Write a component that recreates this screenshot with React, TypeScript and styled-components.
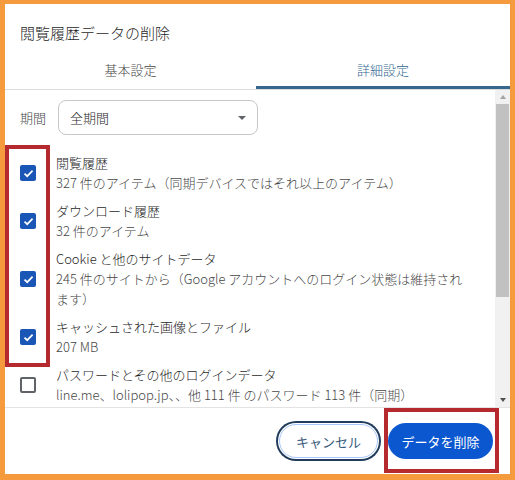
import React from 'react'
import styled, { createGlobalStyle } from 'styled-components'

const GlobalStyle = createGlobalStyle`
  html, body {
    margin: 0;
    padding: 0;
    background: #ffffff;
  }
  body {
    font-family: "Noto Sans CJK JP", "Noto Sans", sans-serif;
    font-weight: 300;
  }
`

type Item = {
  id: number
  title: string
  lines: string[]
  checked: boolean
}

const items: Item[] = [
  { id: 1, title: '閲覧履歴', lines: ['327 件のアイテム（同期デバイスではそれ以上のアイテム）'], checked: true },
  { id: 2, title: 'ダウンロード履歴', lines: ['32 件のアイテム'], checked: true },
  {
    id: 3,
    title: 'Cookie と他のサイトデータ',
    lines: ['245 件のサイトから（Google アカウントへのログイン状態は維持され', 'ます）'],
    checked: true,
  },
  { id: 4, title: 'キャッシュされた画像とファイル', lines: ['207 MB'], checked: true },
  {
    id: 5,
    title: 'パスワードとその他のログインデータ',
    lines: ['line.me、lolipop.jp、、他 111 件 のパスワード 113 件（同期）'],
    checked: false,
  },
]

const Frame = styled.div`
  position: relative;
  box-sizing: border-box;
  width: 515px;
  height: 480px;
  border-style: solid;
  border-color: #f59b3d;
  border-width: 4px 5px 6px 5px;
  background: #ffffff;
  display: flex;
  flex-direction: column;
  overflow: hidden;
`

const Header = styled.div`
  height: 46px;
  box-sizing: border-box;
  padding: 19px 0 0 15px;
`

const Title = styled.h1`
  margin: 0;
  font-size: 15px;
  line-height: 20px;
  font-weight: 300;
  color: #1f1f1f;
`

const TabBar = styled.div`
  display: grid;
  grid-template-columns: 251px 1fr;
  height: 40px;
  box-sizing: border-box;
  border-bottom: 1px solid #dcdcdc;
`

const Tab = styled.div<{ $active?: boolean }>`
  display: flex;
  align-items: center;
  justify-content: center;
  font-size: 13px;
  color: ${p => (p.$active ? '#2f6690' : '#474747')};
  border-bottom: 3px solid ${p => (p.$active ? '#36688f' : 'transparent')};
  padding-top: 3px;
`

const Body = styled.div`
  display: flex;
  height: 317px;
`

const Content = styled.div`
  flex: 1;
  overflow: hidden;
  padding: 10px 0 0 15px;
  box-sizing: border-box;
`

const RangeRow = styled.div`
  display: flex;
  align-items: center;
  gap: 12px;
  margin-bottom: 18px;
`

const RangeLabel = styled.span`
  font-size: 13px;
  color: #444746;
`

const Select = styled.div`
  box-sizing: border-box;
  width: 200px;
  height: 35px;
  border: 1px solid #c7c7c7;
  border-radius: 8px;
  display: flex;
  align-items: center;
  justify-content: space-between;
  padding: 0 11px 0 11px;
  font-size: 13px;
  color: #1f1f1f;
`

const Caret = styled.span`
  width: 0;
  height: 0;
  border-left: 4px solid transparent;
  border-right: 4px solid transparent;
  border-top: 4px solid #5f6368;
`

const List = styled.div`
  display: flex;
  flex-direction: column;
  gap: 8px;
`

const Row = styled.div`
  display: flex;
  align-items: center;
  gap: 20px;
`

const Box = styled.span<{ $checked: boolean }>`
  flex: 0 0 auto;
  box-sizing: border-box;
  width: 16px;
  height: 16px;
  border-radius: 2px;
  background: ${p => (p.$checked ? '#1a56b6' : '#ffffff')};
  border: ${p => (p.$checked ? 'none' : '2px solid #5f6368')};
  display: flex;
  align-items: center;
  justify-content: center;
`

const Texts = styled.div`
  display: flex;
  flex-direction: column;
  white-space: nowrap;
`

const ItemTitle = styled.span`
  font-size: 13px;
  line-height: 20px;
  color: #1f1f1f;
`

const ItemSub = styled.span`
  font-size: 13px;
  line-height: 20px;
  color: #474747;
`

const Scrollbar = styled.div`
  width: 15px;
  background: #f1f1f1;
  display: flex;
  flex-direction: column;
  align-items: center;
`

const Arrow = styled.span<{ $down?: boolean; $dim?: boolean }>`
  width: 0;
  height: 0;
  margin: 5px 0;
  border-left: 3px solid transparent;
  border-right: 3px solid transparent;
  ${p =>
    p.$down
      ? `border-top: 4px solid ${p.$dim ? '#a3a3a3' : '#505050'};`
      : `border-bottom: 4px solid ${p.$dim ? '#a3a3a3' : '#505050'};`}
`

const Thumb = styled.span`
  width: 13px;
  height: 193px;
  background: #c1c1c1;
`

const Spacer = styled.span`
  flex: 1;
`

const Footer = styled.div`
  flex: 1;
  border-top: 1px solid #e3e3e3;
  display: flex;
  align-items: center;
  justify-content: flex-end;
  gap: 10px;
  padding: 0 17px 0 0;
`

const Button = styled.button<{ $primary?: boolean }>`
  box-sizing: border-box;
  height: ${p => (p.$primary ? '36px' : '34px')};
  width: ${p => (p.$primary ? '105px' : '99px')};
  border-radius: 18px;
  font-family: inherit;
  font-size: 13px;
  font-weight: 400;
  cursor: pointer;
  padding: 0;
  background: ${p => (p.$primary ? '#0b57d0' : '#ffffff')};
  color: ${p => (p.$primary ? '#ffffff' : '#3b5b7d')};
  border: ${p => (p.$primary ? 'none' : '1px solid #a8c7fa')};
  box-shadow: ${p => (p.$primary ? 'none' : '0 0 0 1px #ffffff, 0 0 0 3px #213d5b')};
`

const Highlight = styled.div<{ $left: number; $top: number; $w: number; $h: number }>`
  position: absolute;
  box-sizing: border-box;
  left: ${p => p.$left}px;
  top: ${p => p.$top}px;
  width: ${p => p.$w}px;
  height: ${p => p.$h}px;
  border: 4px solid #b52a2f;
  pointer-events: none;
`

const Check = () => (
  <svg width="11" height="9" viewBox="0 0 11 9">
    <polyline points="1.5,4.6 4.2,7.2 9.6,1.6" fill="none" stroke="#ffffff" strokeWidth="1.7" />
  </svg>
)

export default function App() {
  return (
    <>
      <GlobalStyle />
      <Frame>
        <Header>
          <Title>閲覧履歴データの削除</Title>
        </Header>
        <TabBar>
          <Tab>基本設定</Tab>
          <Tab $active>詳細設定</Tab>
        </TabBar>
        <Body>
          <Content>
            <RangeRow>
              <RangeLabel>期間</RangeLabel>
              <Select>
                <span>全期間</span>
                <Caret />
              </Select>
            </RangeRow>
            <List>
              {items.map(item => (
                <Row key={item.id}>
                  <Box $checked={item.checked}>{item.checked && <Check />}</Box>
                  <Texts>
                    <ItemTitle>{item.title}</ItemTitle>
                    {item.lines.map(line => (
                      <ItemSub key={line}>{line}</ItemSub>
                    ))}
                  </Texts>
                </Row>
              ))}
            </List>
          </Content>
          <Scrollbar>
            <Arrow $dim />
            <Thumb />
            <Spacer />
            <Arrow $down />
          </Scrollbar>
        </Body>
        <Footer>
          <Button>キャンセル</Button>
          <Button $primary>データを削除</Button>
        </Footer>
        <Highlight $left={0} $top={141} $w={45} $h={222} />
        <Highlight $left={379} $top={404} $w={115} $h={65} />
      </Frame>
    </>
  )
}
